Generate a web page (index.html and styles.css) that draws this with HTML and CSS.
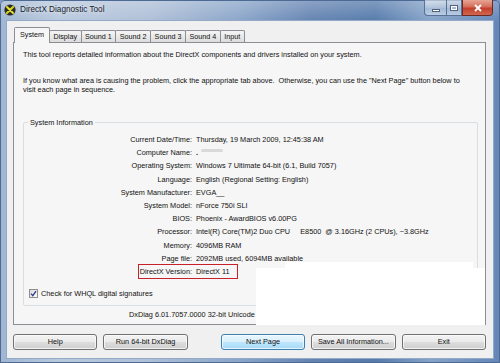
FILE: index.html
```html
<!DOCTYPE html>
<html>
<head>
<meta charset="utf-8">
<link rel="stylesheet" href="styles.css">
</head>
<body>
<div class="window">
  <div class="titlebar">
    <svg class="app-icon" viewBox="0 0 12 12" width="12" height="12">
      <circle cx="6" cy="6" r="5.6" fill="#2b2b2b"/>
      <path d="M3 3 L9 9 M9 3 L3 9" stroke="#d6d21a" stroke-width="2.2" stroke-linecap="round"/>
      <path d="M3.4 3.2 L8.6 8.6" stroke="#f3ee6a" stroke-width="0.8" stroke-linecap="round"/>
    </svg>
    <span class="title">DirectX Diagnostic Tool</span>
    <div class="controls">
      <span class="ctl min"><span class="min-bar"></span></span>
      <span class="ctl max"><span class="max-box"></span></span>
      <span class="ctl close">
        <svg viewBox="0 0 10 8" width="10" height="8"><path d="M2 1 L8 7 M8 1 L2 7" stroke="#fff" stroke-width="1.8"/></svg>
      </span>
    </div>
  </div>
  <div class="client">
    <div class="tabs">
      <span class="tab active">System</span>
      <span class="tab">Display</span>
      <span class="tab">Sound 1</span>
      <span class="tab">Sound 2</span>
      <span class="tab">Sound 3</span>
      <span class="tab">Sound 4</span>
      <span class="tab">Input</span>
    </div>
    <div class="panel">
      <p class="intro">This tool reports detailed information about the DirectX components and drivers installed on your system.</p>
      <p class="intro2">If you know what area is causing the problem, click the appropriate tab above.&nbsp; Otherwise, you can use the "Next Page" button below to<br>visit each page in sequence.</p>
      <fieldset class="group">
        <legend>System Information</legend>
        <div class="rows">
          <div class="row"><span class="k">Current Date/Time:</span><span class="v">Thursday, 19 March 2009, 12:45:38 AM</span></div>
          <div class="row"><span class="k">Computer Name:</span><span class="v"><span class="smudge-dot">.</span><span class="smudge"></span></span></div>
          <div class="row"><span class="k">Operating System:</span><span class="v">Windows 7 Ultimate 64-bit (6.1, Build 7057)</span></div>
          <div class="row"><span class="k">Language:</span><span class="v">English (Regional Setting: English)</span></div>
          <div class="row"><span class="k">System Manufacturer:</span><span class="v">EVGA__</span></div>
          <div class="row"><span class="k">System Model:</span><span class="v">nForce 750i SLI</span></div>
          <div class="row"><span class="k">BIOS:</span><span class="v">Phoenix - AwardBIOS v6.00PG</span></div>
          <div class="row"><span class="k">Processor:</span><span class="v">Intel(R) Core(TM)2 Duo CPU     E8500  @ 3.16GHz (2 CPUs), ~3.8GHz</span></div>
          <div class="row"><span class="k">Memory:</span><span class="v">4096MB RAM</span></div>
          <div class="row"><span class="k">Page file:</span><span class="v">2092MB used, 6094MB available</span></div>
          <div class="row marked"><span class="k">DirectX Version:</span><span class="v">DirectX 11</span><span class="highlight"></span></div>
        </div>
        <label class="check">
          <span class="box">
            <svg viewBox="0 0 9 9" width="9" height="9"><path d="M2 4.6 L3.8 6.6 L7 2.2" stroke="#2a3c8a" stroke-width="1.3" fill="none"/></svg>
          </span>
          <span>Check for WHQL digital signatures</span>
        </label>
      </fieldset>
      <p class="version">DxDiag 6.01.7057.0000 32-bit Unicode</p>
    </div>
    <div class="buttons">
      <span class="btn">Help</span>
      <span class="btn">Run 64-bit DxDiag</span>
      <span class="btn default gap">Next Page</span>
      <span class="btn">Save All Information...</span>
      <span class="btn">Exit</span>
    </div>
  </div>
  <div class="redact redact-a"></div>
  <div class="redact redact-b"></div>
</div>
</body>
</html>
```
FILE: styles.css
```css
* { box-sizing: border-box; margin: 0; padding: 0; }
html, body { width: 500px; height: 363px; overflow: hidden; }
body {
  font-family: "Liberation Sans", Arial, sans-serif;
  font-size: 7.3px;
  color: #111;
  background: #7f9bc5;
}
.window {
  position: relative;
  width: 500px;
  height: 363px;
  display: flex;
  flex-direction: column;
  background:
    linear-gradient(180deg, rgba(255,255,255,0.25) 0, rgba(255,255,255,0) 22px),
    linear-gradient(90deg, #9fb5d2 0%, #b9c9dd 12%, #aebfd7 30%, #8aa5c9 48%, #6584b2 62%, #557aab 75%, #86a3c8 86%, #6486b8 100%);
  border-radius: 5px 5px 0 0;
  box-shadow: inset 0 0 0 1px #4d6a95;
}
.titlebar {
  height: 21px;
  display: flex;
  align-items: flex-start;
  padding-left: 4px;
}
.app-icon { margin-top: 4px; flex: none; }
.title {
  font-size: 8.2px;
  line-height: 10px;
  margin-top: 5px;
  margin-left: 4px;
  color: #16202c;
  text-shadow: 0 0 4px rgba(255,255,255,0.9);
}
.controls {
  margin-left: auto;
  margin-right: 7px;
  display: flex;
}
.ctl {
  height: 16px;
  display: flex;
  align-items: center;
  justify-content: center;
  border: 1px solid #5a7196;
  border-top: none;
  background: linear-gradient(180deg, rgba(255,255,255,0.55) 0, rgba(255,255,255,0.25) 50%, rgba(180,200,225,0.35) 51%, rgba(220,232,245,0.6) 100%);
}
.min { width: 22px; border-radius: 0 0 0 4px; border-right: none; }
.max { width: 16px; }
.close {
  width: 31px;
  border-radius: 0 0 4px 0;
  border-color: #6d2a22;
  background: linear-gradient(180deg, #e8a594 0, #d46e5b 45%, #c2402c 55%, #d2674e 100%);
}
.min-bar { width: 8px; height: 3px; background: #fff; border: 1px solid #53627a; margin-top: 5px; }
.max-box { width: 8px; height: 6px; border: 1px solid #53627a; box-shadow: inset 0 0 0 1px #fff; }

.client {
  flex: 1;
  margin: 0 7px 5px 7px;
  background: #f0f0f0;
  box-shadow: 0 0 0 1px #93a9c8;
  padding: 6px 7px 0 6px;
  display: flex;
  flex-direction: column;
}
.tabs {
  display: flex;
  align-items: flex-end;
  height: 15px;
  padding-left: 1px;
  position: relative;
  z-index: 1;
}
.tab {
  height: 12px;
  line-height: 11px;
  padding: 0 3.5px;
  border: 1px solid #8c8e94;
  border-bottom: none;
  margin-right: -1px;
  background: linear-gradient(180deg, #f5f5f5 0, #e9e9e9 50%, #dcdcdc 100%);
  border-radius: 2px 2px 0 0;
  font-size: 7.2px;
  white-space: nowrap;
}
.tab.active {
  height: 16px;
  margin-bottom: -1px;
  line-height: 14px;
  padding: 0 5px;
  background: #f6f6f6;
  position: relative;
  z-index: 2;
}
.panel {
  height: 283px;
  border: 1px solid #8c8e94;
  background: #f6f6f6;
  padding: 7px 0 0 9px;
}
.intro { line-height: 9px; white-space: nowrap; }
.intro2 { line-height: 9px; margin-top: 17px; white-space: nowrap; }
.group {
  margin: 24px 7px 0 0;
  border: 1px solid #d9dee3;
  border-radius: 2px;
  padding: 6px 0 6px 0;
  min-width: 0;
}
.group legend {
  line-height: 9px;
  padding: 0 2px;
  margin-left: 4px;
}
.rows { display: flex; flex-direction: column; }
.row {
  position: relative;
  display: flex;
  height: 13.2px;
  align-items: center;
  white-space: pre;
}
.k { width: 168px; text-align: right; flex: none; }
.v { margin-left: 4px; }
.smudge-dot { font-weight: bold; }
.smudge {
  display: inline-block;
  width: 22px;
  height: 3px;
  margin-left: 3px;
  vertical-align: 3px;
  background: #d9d9d9;
  border-radius: 2px;
  filter: blur(0.6px);
}
.highlight {
  position: absolute;
  left: 114px;
  top: -1px;
  width: 100px;
  height: 15px;
  border: 1.5px solid #c8202a;
}
.check {
  display: flex;
  align-items: center;
  height: 12px;
  margin-top: 9px;
  padding-left: 5px;
  gap: 3px;
}
.box {
  width: 9px;
  height: 9px;
  border: 1px solid #8f8f8f;
  background: linear-gradient(135deg, #dcdcdc, #fbfbfb);
  display: flex;
}
.box svg { margin: -1px; }
.version {
  margin-top: 4px;
  line-height: 10px;
  padding-left: 106px;
}
.buttons {
  display: flex;
  margin-top: 9px;
  gap: 6px;
}
.btn {
  width: 85px;
  height: 16px;
  line-height: 14px;
  text-align: center;
  border: 1px solid #707070;
  border-radius: 3px;
  background: linear-gradient(180deg, #f3f3f3 0, #ebebeb 48%, #dddddd 52%, #cfcfcf 100%);
  box-shadow: inset 0 0 0 1px rgba(255,255,255,0.7);
  white-space: nowrap;
}
.btn.default { border-color: #3c7fb1; background: linear-gradient(180deg, #eaf6fd 0, #d9f0fc 48%, #bee6fd 52%, #a7d9f5 100%); }
.btn.gap { margin-left: 27px; }
.redact { position: absolute; background: #fff; }
.redact-a { left: 285px; top: 262px; width: 188px; height: 10px; }
.redact-b { left: 256px; top: 268px; width: 229px; height: 57px; }
```
